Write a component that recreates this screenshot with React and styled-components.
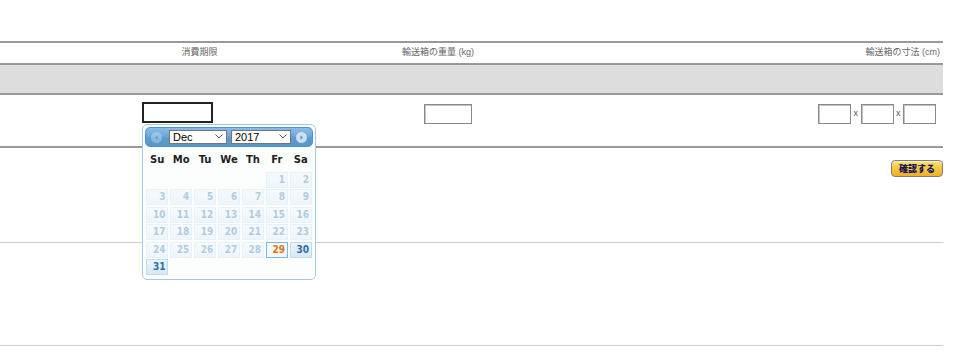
import React from "react";
import styled, { createGlobalStyle } from "styled-components";

const Global = createGlobalStyle`
  html, body { margin: 0; padding: 0; background: #fff; }
  body { font-family: "Liberation Sans", Arial, "Noto Sans CJK JP", sans-serif; }
  * { box-sizing: border-box; }
`;

const Page = styled.div`
  width: 943px;
  padding-top: 41px;
`;

const Table = styled.div`
  border-top: 2px solid #999;
`;

const Row = styled.div`
  display: grid;
  grid-template-columns: 142px 115px 218px 1fr;
  height: ${(p) => p.$h}px;
  background: ${(p) => p.$bg || "transparent"};
  border-bottom: 2px solid #999;
`;

const HeadCell = styled.div`
  display: flex;
  align-items: center;
  justify-content: ${(p) => (p.$align === "right" ? "flex-end" : "center")};
  padding-right: ${(p) => p.$pr || 0}px;
  padding-bottom: 3px;
  font-size: 9px;
  color: #666;
  white-space: nowrap;
`;

const Cell = styled.div`
  position: relative;
  display: flex;
  align-items: flex-start;
  justify-content: ${(p) => (p.$align === "right" ? "flex-end" : "flex-start")};
  padding-top: ${(p) => p.$pt || 0}px;
  padding-right: ${(p) => p.$pr || 0}px;
`;

const TextInput = styled.input`
  width: ${(p) => p.$w}px;
  height: ${(p) => p.$h || 20}px;
  margin: 0;
  padding: 0 2px;
  background: #fff;
  border: ${(p) => (p.$focus ? "2px solid #222" : "1px solid #8a8a8a")};
  box-shadow: ${(p) => (p.$focus ? "none" : "inset 1px 1px 0 #c4c4c4")};
  outline: none;
  font-size: 11px;
`;

const Times = styled.span`
  width: 9.5px;
  text-align: center;
  font-size: 9px;
  color: #555;
  line-height: 18px;
`;

const Actions = styled.div`
  display: flex;
  justify-content: flex-end;
  padding-top: 12px;
  height: 95px;
  border-bottom: 1px solid #ccc;
`;

const ConfirmButton = styled.button`
  width: 52px;
  height: 17px;
  padding: 0;
  margin: 0;
  border: 1px solid #7d7f8c;
  border-radius: 4px;
  background: linear-gradient(#fde27a 0%, #f8c843 45%, #efb022 100%);
  box-shadow: inset 0 1px 0 #fff3b8;
  color: #14145e;
  font-family: "Noto Sans CJK JP", sans-serif;
  font-size: 9px;
  font-weight: 900;
  line-height: 15px;
  letter-spacing: 0;
`;

const Spacer = styled.div`
  height: 103px;
  border-bottom: 1px solid #ccc;
`;

/* ---------- datepicker ---------- */

const Picker = styled.div`
  position: absolute;
  left: 0;
  top: 29px;
  z-index: 10;
  width: 174px;
  height: 156px;
  padding: 2px;
  background: #fcfdfd;
  border: 1px solid #a6c9e2;
  border-radius: 5px;
  font-family: "DejaVu Sans", Verdana, sans-serif;
`;

const PickerHeader = styled.div`
  height: 20px;
  display: flex;
  align-items: center;
  padding: 0 5px 0 5px;
  border: 1px solid #4297d7;
  border-radius: 5px;
  background: linear-gradient(#8cbbe6 0%, #6ea8db 45%, #5c9ccc 55%, #5896cc 100%);
`;

const NavIcon = styled.svg`
  display: block;
  width: 11px;
  height: 11px;
  flex: none;
  opacity: ${(p) => (p.$disabled ? 0.35 : 0.8)};
`;

const SelectWrap = styled.div`
  position: relative;
  flex: none;
  width: ${(p) => p.$w}px;
  height: 14px;
  margin-left: ${(p) => p.$ml || 0}px;
`;

const Select = styled.select`
  appearance: none;
  display: block;
  width: 100%;
  height: 14px;
  margin: 0;
  padding: 0 0 0 3px;
  border: 1px solid #767676;
  border-radius: 0;
  background: #fff;
  color: #000;
  font-family: "Liberation Sans", Arial, sans-serif;
  font-size: 11px;
  line-height: 12px;
  outline: none;
`;

const Chevron = styled.svg`
  position: absolute;
  right: 4px;
  top: 4px;
  width: 8px;
  height: 5px;
  pointer-events: none;
`;

const Dow = styled.div`
  display: grid;
  grid-template-columns: repeat(7, 1fr);
  column-gap: 1.5px;
  margin: 0 1px;
  height: 25px;
  align-items: center;
  font-size: 10px;
  font-weight: 700;
  color: #222;
  text-align: center;
`;

const Days = styled.div`
  display: grid;
  grid-template-columns: repeat(7, 1fr);
  grid-auto-rows: 16px;
  column-gap: 1.5px;
  row-gap: 1.4px;
  margin: 0 1px;
`;

const Day = styled.div`
  border: 1px solid ${(p) => (p.$active ? "#79b7e7" : "#c5dbec")};
  background: ${(p) =>
    p.$active ? "#f5f8f9" : "linear-gradient(#e9f3fc, #dfeffc 50%, #d6e8f8)"};
  color: ${(p) => (p.$active ? "#e17009" : "#2e6e9e")};
  opacity: ${(p) => (p.$disabled ? 0.35 : 1)};
  text-align: right;
  padding-right: 2px;
  font-size: 10px;
  font-weight: 700;
  font-stretch: condensed;
  line-height: 14px;
`;

const Blank = styled.div``;

const Fill = styled.div`
  flex: 1;
`;

function Circle({ dir, disabled }) {
  return (
    <NavIcon viewBox="0 0 11 11" $disabled={disabled}>
      <circle cx="5.5" cy="5.5" r="5.5" fill="#e6eef6" />
      {dir === "left" ? (
        <path d="M6.6 3.2 L3.8 5.5 L6.6 7.8 Z" fill="#5c9ccc" />
      ) : (
        <path d="M4.4 3.2 L7.2 5.5 L4.4 7.8 Z" fill="#5c9ccc" />
      )}
    </NavIcon>
  );
}

function Dropdown({ w, ml, value, options }) {
  return (
    <SelectWrap $w={w} $ml={ml}>
      <Select defaultValue={value}>
        {options.map((o) => (
          <option key={o}>{o}</option>
        ))}
      </Select>
      <Chevron viewBox="0 0 8 5">
        <path d="M0.5 0.5 L4 4 L7.5 0.5" fill="none" stroke="#555" strokeWidth="1" />
      </Chevron>
    </SelectWrap>
  );
}

function DatePicker() {
  const months = ["Jan", "Feb", "Mar", "Apr", "May", "Jun", "Jul", "Aug", "Sep", "Oct", "Nov", "Dec"];
  const cells = [];
  for (let i = 0; i < 5; i++) cells.push(<Blank key={"b" + i} />);
  for (let d = 1; d <= 31; d++) {
    cells.push(
      <Day key={d} $disabled={d < 29} $active={d === 29}>
        {d}
      </Day>
    );
  }
  return (
    <Picker>
      <PickerHeader>
        <Circle dir="left" disabled />
        <Dropdown w={58} ml={7} value="Dec" options={months} />
        <Dropdown w={60} ml={4} value="2017" options={["2016", "2017", "2018"]} />
        <Fill />
        <Circle dir="right" />
      </PickerHeader>
      <Dow>
        {["Su", "Mo", "Tu", "We", "Th", "Fr", "Sa"].map((d) => (
          <span key={d}>{d}</span>
        ))}
      </Dow>
      <Days>{cells}</Days>
    </Picker>
  );
}

export default function App() {
  return (
    <>
      <Global />
      <Page>
        <Table>
          <Row $h={22}>
            <HeadCell />
            <HeadCell>消費期限</HeadCell>
            <HeadCell $align="right" $pr={1}>輸送箱の重量 (kg)</HeadCell>
            <HeadCell $align="right" $pr={3}>輸送箱の寸法 (cm)</HeadCell>
          </Row>
          <Row $h={30} $bg="#dddddd">
            <Cell />
            <Cell />
            <Cell />
            <Cell />
          </Row>
          <Row $h={53}>
            <Cell />
            <Cell $pt={7}>
              <TextInput $w={71} $h={21} $focus />
              <DatePicker />
            </Cell>
            <Cell $align="right" $pt={9} $pr={3}>
              <TextInput $w={48} />
            </Cell>
            <Cell $align="right" $pt={9} $pr={7}>
              <TextInput $w={33} />
              <Times>x</Times>
              <TextInput $w={33} />
              <Times>x</Times>
              <TextInput $w={33} />
            </Cell>
          </Row>
        </Table>
        <Actions>
          <ConfirmButton>確認する</ConfirmButton>
        </Actions>
        <Spacer />
      </Page>
    </>
  );
}
